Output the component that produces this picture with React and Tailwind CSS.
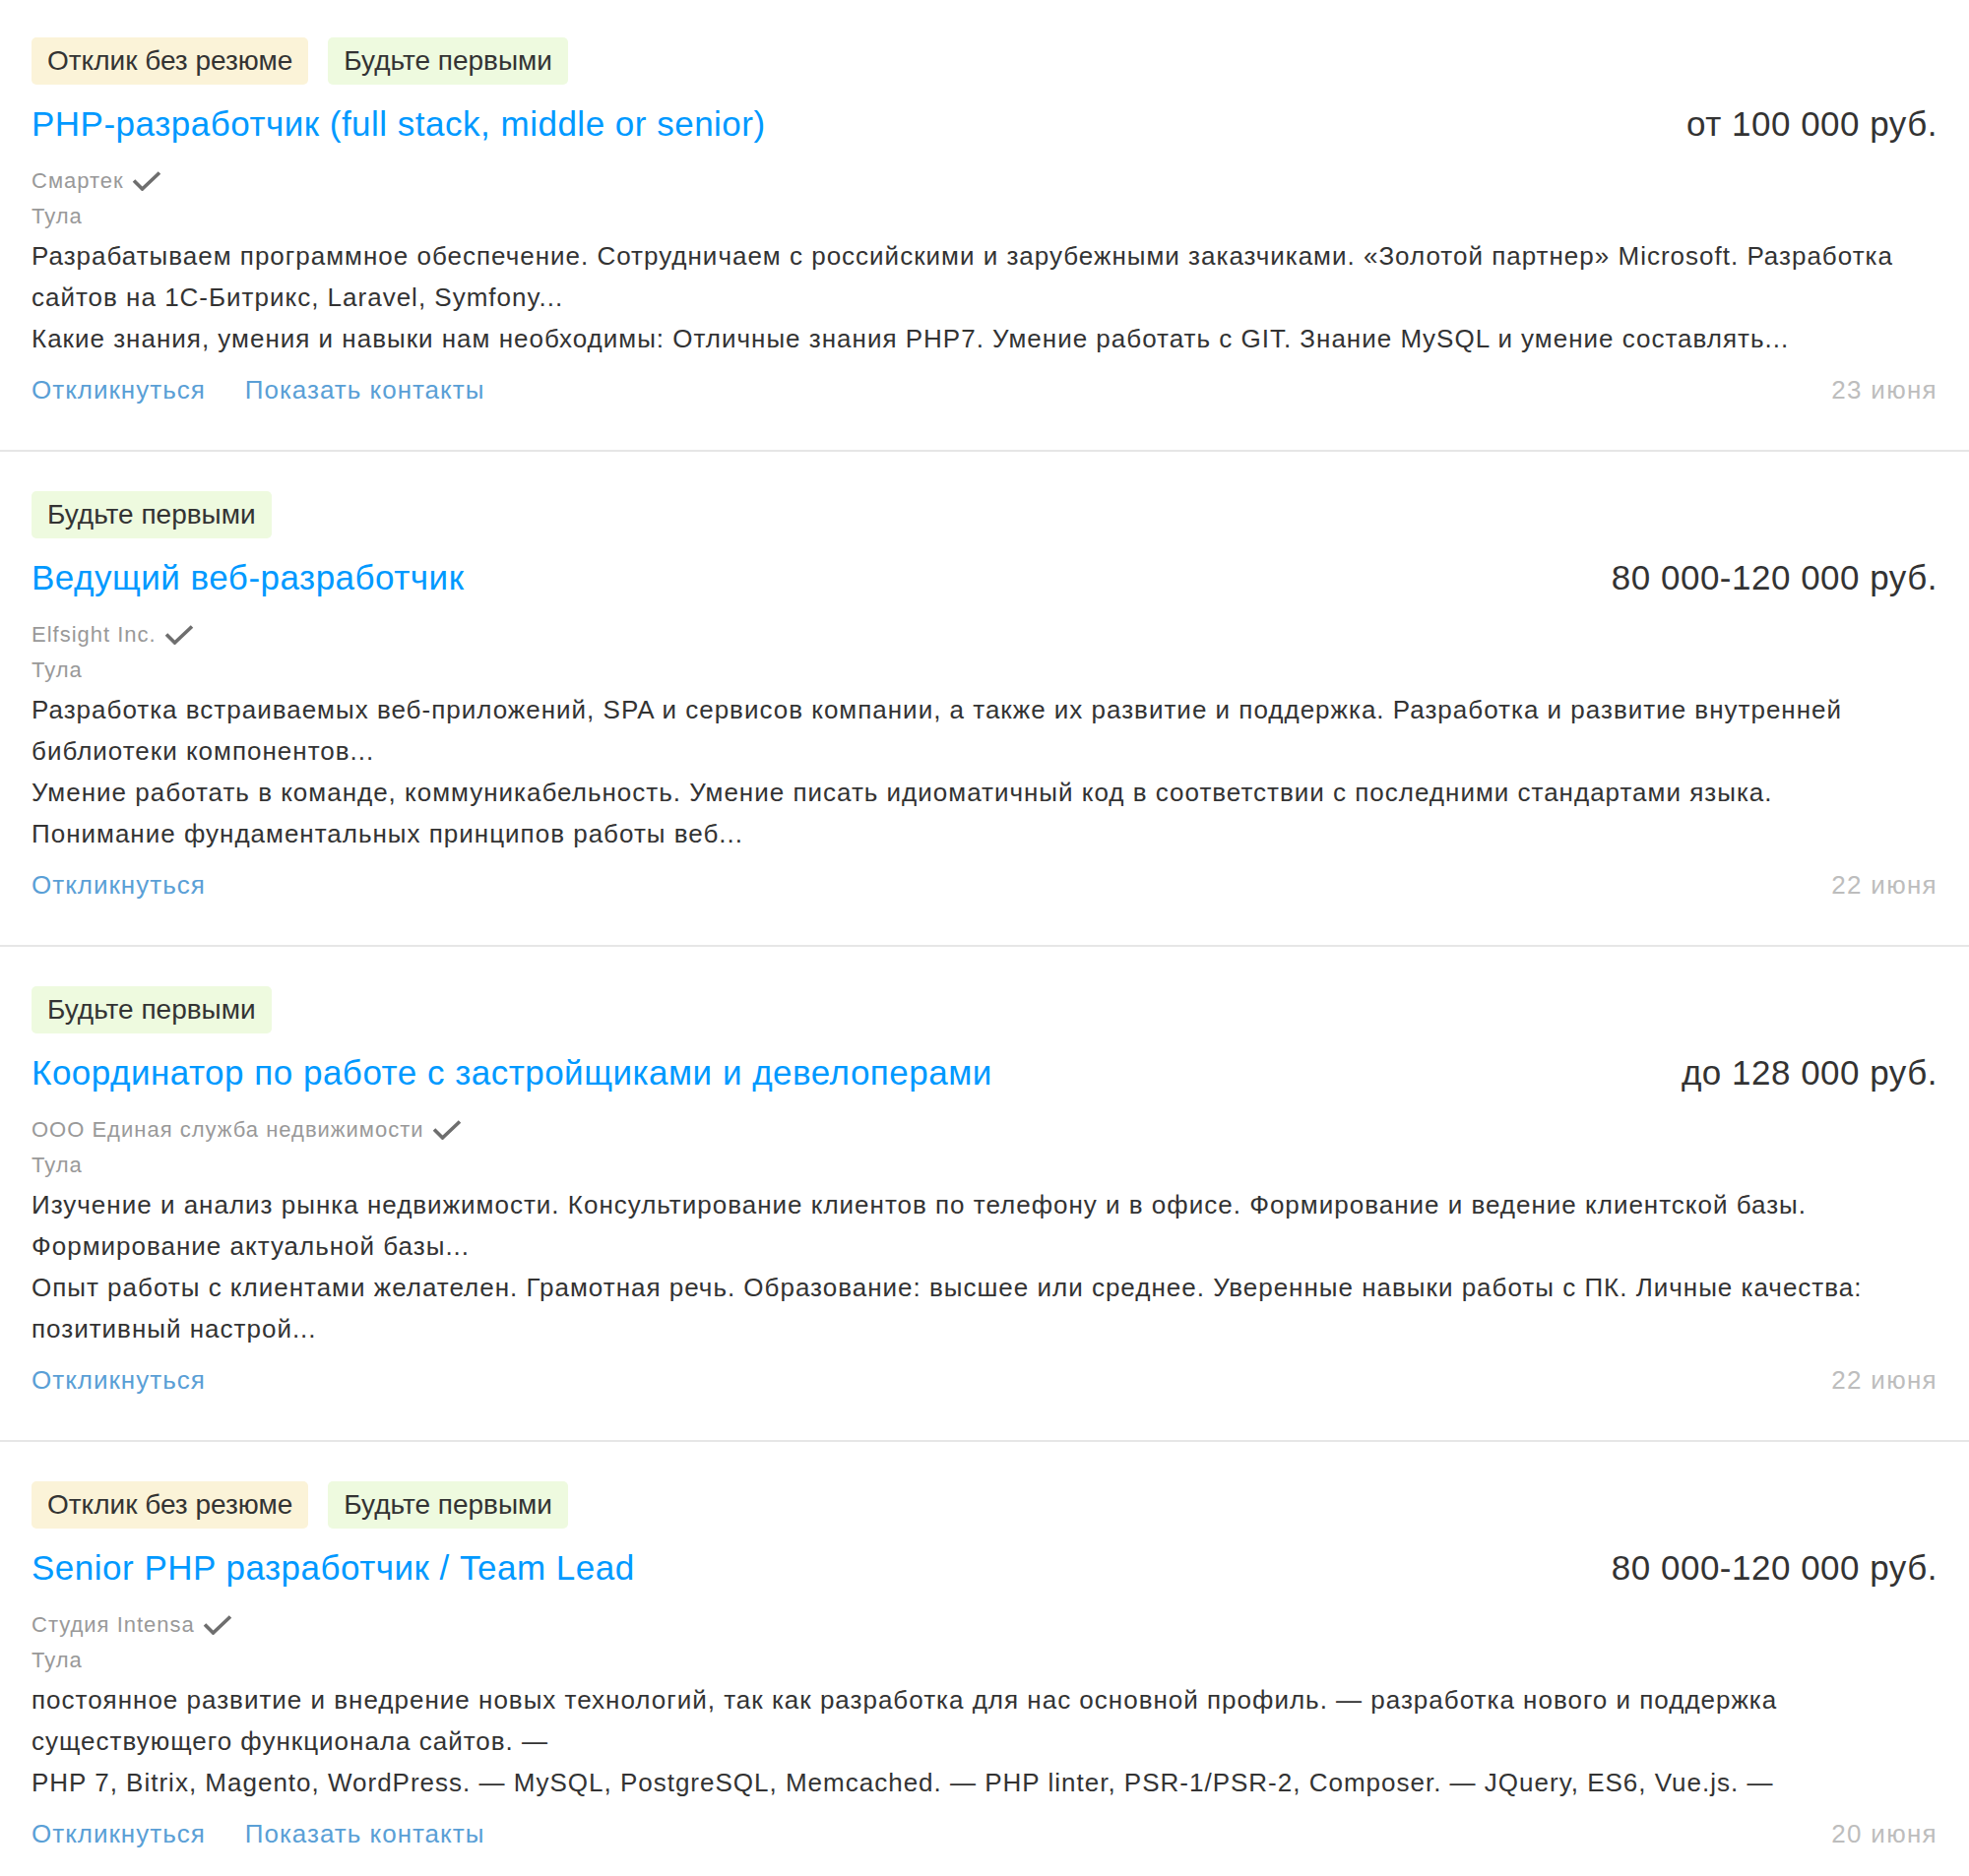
import React from "react";

const vacancies = [
  {
    tags: ["noresume", "first"],
    title: "PHP-разработчик (full stack, middle or senior)",
    salary: "от 100 000 руб.",
    company: "Смартек",
    city: "Тула",
    text: [
      "Разрабатываем программное обеспечение. Сотрудничаем с российскими и зарубежными заказчиками. «Золотой партнер» Microsoft. Разработка сайтов на 1С-Битрикс, Laravel, Symfony...",
      "Какие знания, умения и навыки нам необходимы: Отличные знания PHP7. Умение работать с GIT. Знание MySQL и умение составлять...",
    ],
    contacts: true,
    date: "23 июня",
  },
  {
    tags: ["first"],
    title: "Ведущий веб-разработчик",
    salary: "80 000-120 000 руб.",
    company: "Elfsight Inc.",
    city: "Тула",
    text: [
      "Разработка встраиваемых веб-приложений, SPA и сервисов компании, а также их развитие и поддержка. Разработка и развитие внутренней библиотеки компонентов...",
      "Умение работать в команде, коммуникабельность. Умение писать идиоматичный код в соответствии с последними стандартами языка. Понимание фундаментальных принципов работы веб...",
    ],
    contacts: false,
    date: "22 июня",
  },
  {
    tags: ["first"],
    title: "Координатор по работе с застройщиками и девелоперами",
    salary: "до 128 000 руб.",
    company: "ООО Единая служба недвижимости",
    city: "Тула",
    text: [
      "Изучение и анализ рынка недвижимости. Консультирование клиентов по телефону и в офисе. Формирование и ведение клиентской базы. Формирование актуальной базы...",
      "Опыт работы с клиентами желателен. Грамотная речь. Образование: высшее или среднее. Уверенные навыки работы с ПК. Личные качества: позитивный настрой...",
    ],
    contacts: false,
    date: "22 июня",
  },
  {
    tags: ["noresume", "first"],
    title: "Senior PHP разработчик / Team Lead",
    salary: "80 000-120 000 руб.",
    company: "Студия Intensa",
    city: "Тула",
    text: [
      "постоянное развитие и внедрение новых технологий, так как разработка для нас основной профиль. — разработка нового и поддержка существующего функционала сайтов. —",
      "PHP 7, Bitrix, Magento, WordPress. — MySQL, PostgreSQL, Memcached. — PHP linter, PSR-1/PSR-2, Composer. — JQuery, ES6, Vue.js. —",
    ],
    contacts: true,
    date: "20 июня",
  },
];

const Check = () => (
  <svg width="30" height="20" viewBox="0 0 30 20" className="ml-2 inline-block">
    <polyline
      points="2,9.5 10.5,18 28,1.5"
      fill="none"
      stroke="#6e6e6e"
      strokeWidth="3.6"
    />
  </svg>
);

const Tag = ({ kind }) =>
  kind === "noresume" ? (
    <span className="h-12 px-4 flex items-center rounded-[5px] bg-[#fbf3d8] text-[28px] text-[#333]">
      Отклик без резюме
    </span>
  ) : (
    <span className="h-12 px-4 flex items-center rounded-[5px] bg-[#eefadf] text-[28px] text-[#333]">
      Будьте первыми
    </span>
  );

const Vacancy = ({ v, first }) => (
  <div
    className={`${first ? "pt-[38px]" : "pt-10"} pb-10 px-8 border-b-2 border-[#e6e6e6]`}
  >
    {/* Tags */}
    <div className="flex gap-5">
      {v.tags.map((t) => (
        <Tag key={t} kind={t} />
      ))}
    </div>

    {/* Title & salary */}
    <div className="mt-4 flex justify-between items-baseline text-[35px] leading-[48px] tracking-[0.5px]">
      <a href="#" className="text-[#0099ff]">
        {v.title}
      </a>
      <span className="text-[#333]">{v.salary}</span>
    </div>

    <div className="mt-4 flex items-center text-[22px] leading-[36px] tracking-[1px] text-[#999]">
      {v.company}
      <Check />
    </div>
    <div className="text-[22px] leading-[36px] tracking-[1px] text-[#999]">
      {v.city}
    </div>

    <div className="mt-px pr-7 text-[26px] leading-[42px] tracking-[1px] text-[#333]">
      {v.text.map((p, i) => (
        <p key={i}>{p}</p>
      ))}
    </div>

    {/* Actions */}
    <div className="mt-[10px] flex justify-between text-[26px] leading-[42px] tracking-[1px]">
      <div className="flex gap-10 text-[#5a9fd6]">
        <a href="#">Откликнуться</a>
        {v.contacts && <a href="#">Показать контакты</a>}
      </div>
      <span className="text-[#bdbdbd] tracking-[1.3px]">{v.date}</span>
    </div>
  </div>
);

export default function App() {
  return (
    <div className="bg-white w-full min-h-screen font-['Liberation_Sans',Arial,sans-serif]">
      {vacancies.map((v, i) => (
        <Vacancy key={i} v={v} first={i === 0} />
      ))}
    </div>
  );
}
